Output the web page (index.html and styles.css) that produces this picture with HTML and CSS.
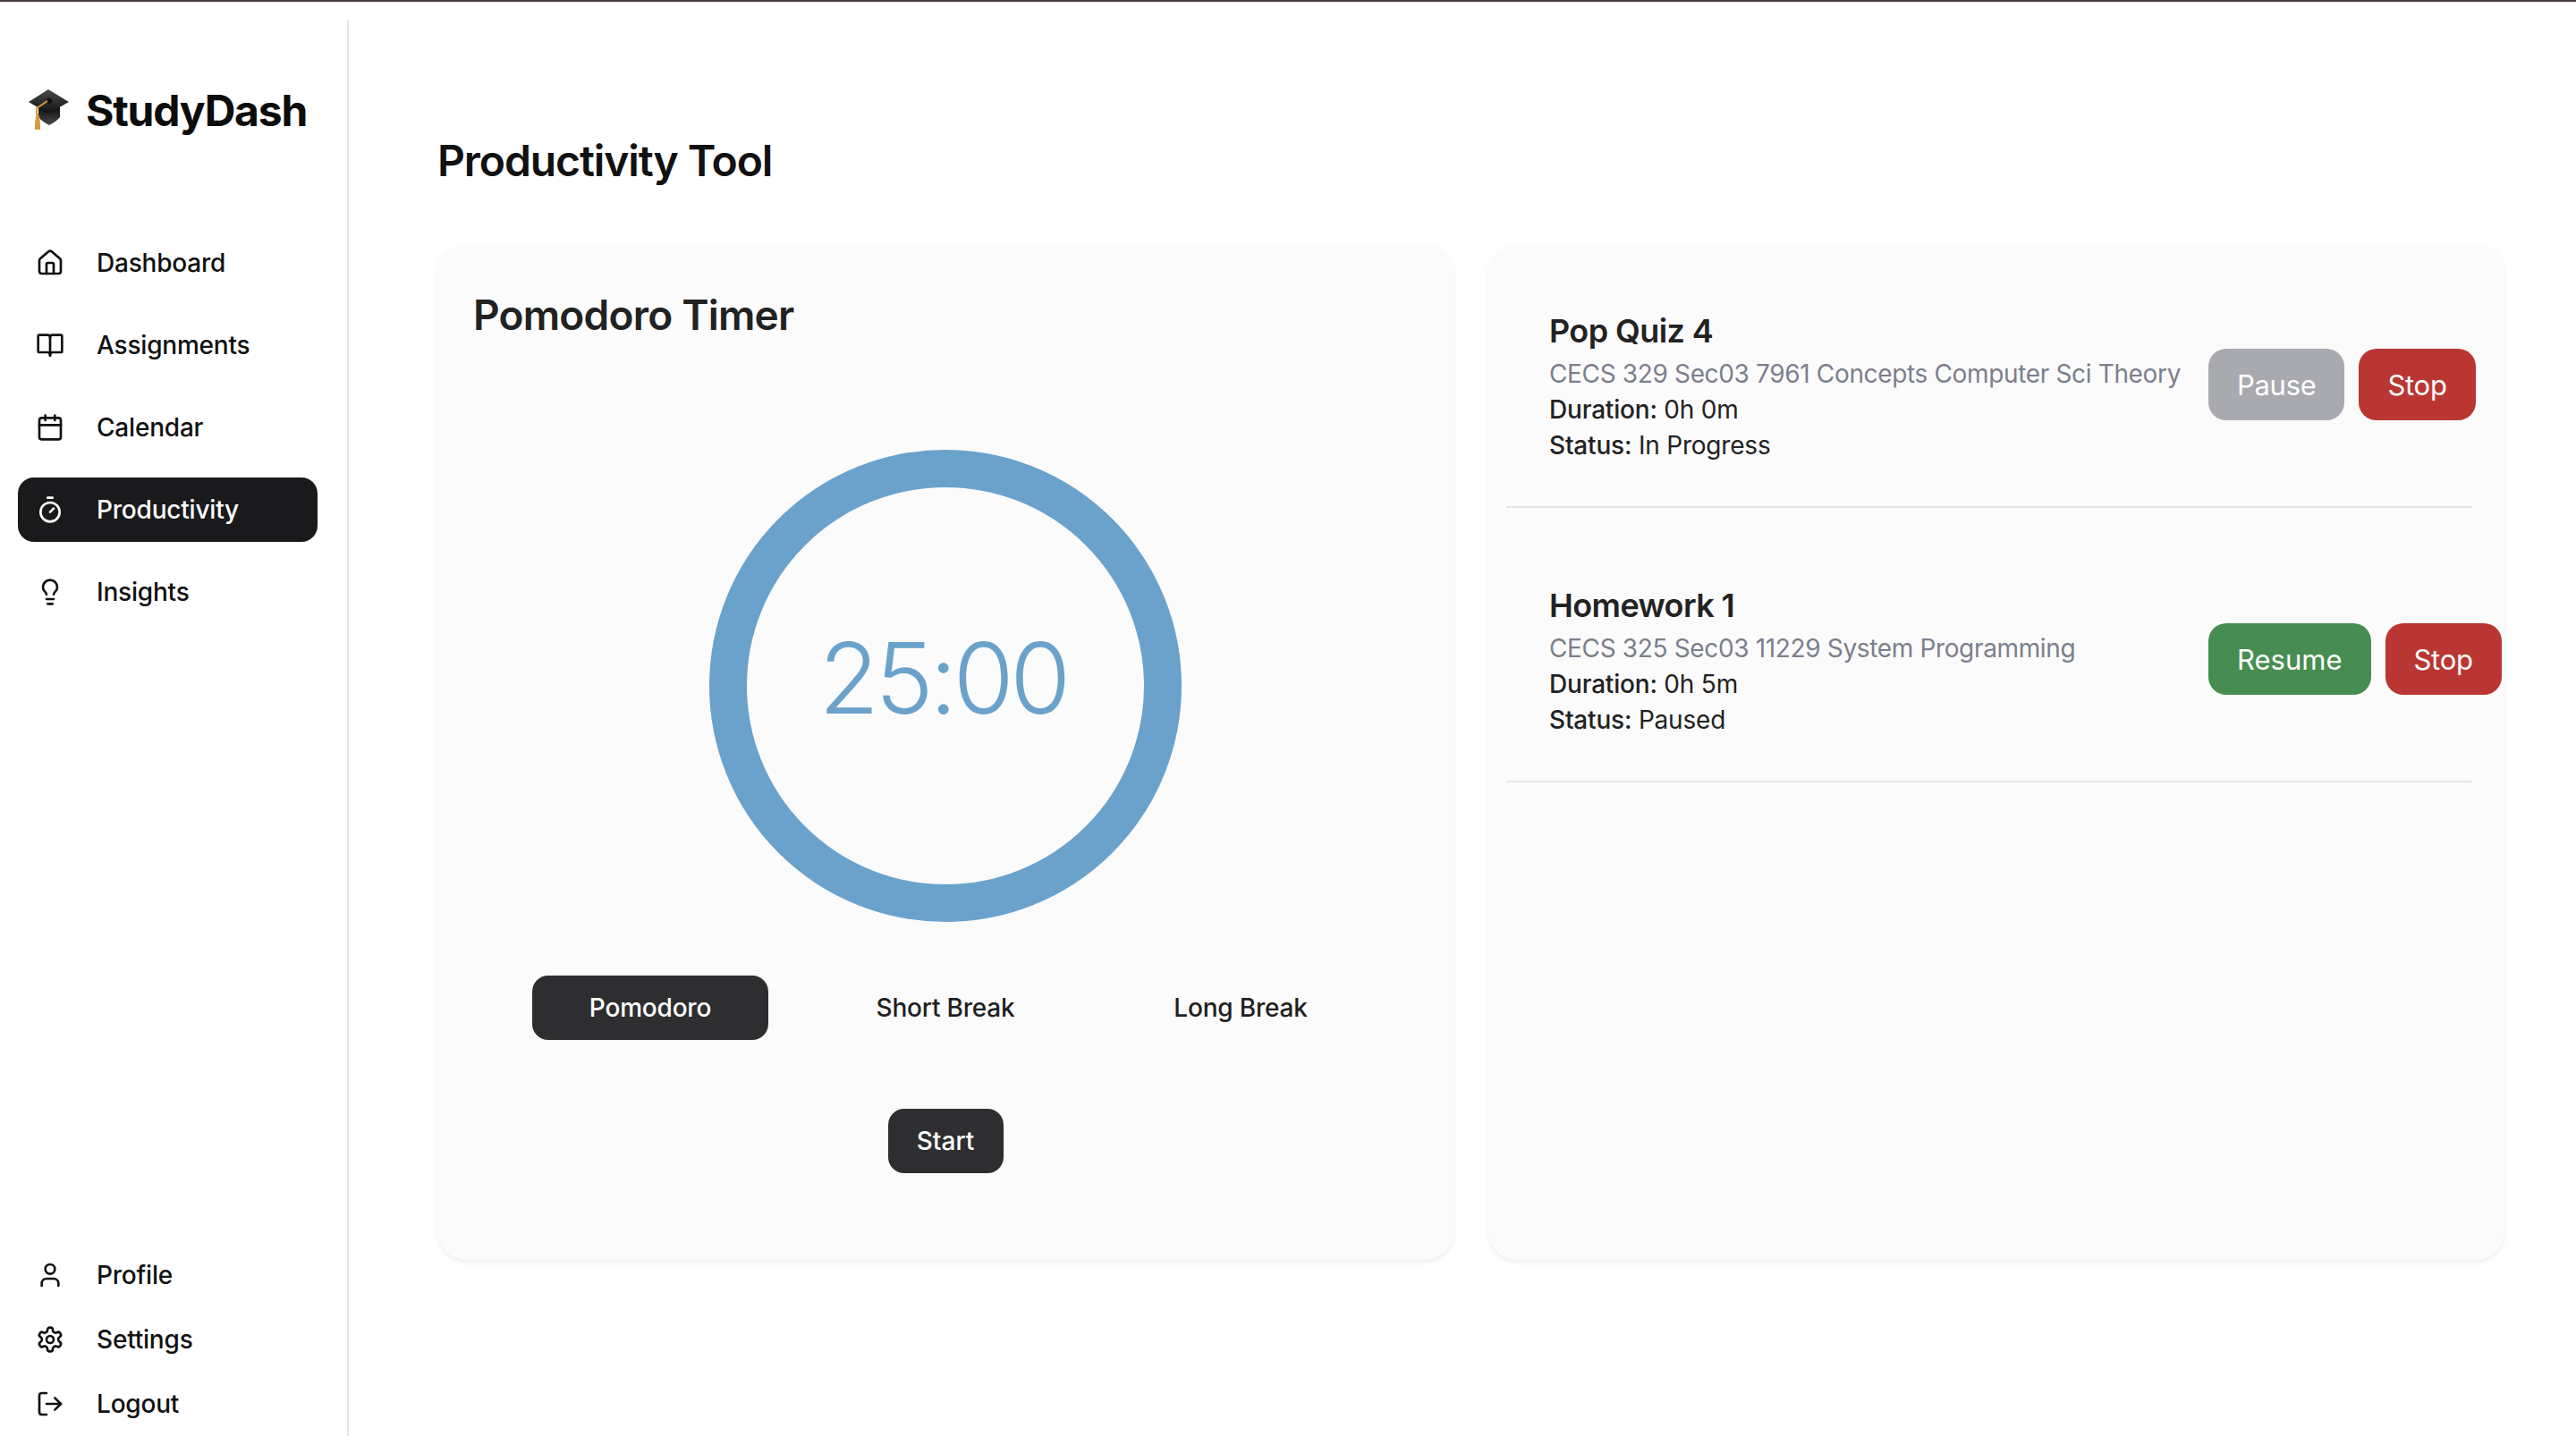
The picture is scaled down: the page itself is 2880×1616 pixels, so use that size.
FILE: index.html
```html
<!DOCTYPE html>
<html>
<head>
  <title>StudyDash - Productivity</title>
  <meta charset="utf-8">
  <link rel="stylesheet" href="styles.css">
</head>
<body>
  <div class="top-line"></div>
  <div class="shell">
    <aside class="sidebar">
      <div class="logo">
        <svg class="logo-cap" viewBox="0 0 46 46" width="46" height="46">
          <defs>
            <linearGradient id="capTop" x1="0" y1="0" x2="0" y2="1">
              <stop offset="0" stop-color="#4a4a4a"/>
              <stop offset="1" stop-color="#111"/>
            </linearGradient>
            <linearGradient id="capBase" x1="0" y1="0" x2="0" y2="1">
              <stop offset="0" stop-color="#0e0e0e"/>
              <stop offset="1" stop-color="#4c4c4c"/>
            </linearGradient>
          </defs>
          <path d="M11 20v11c3 4 8 7 12 9 4-2 9-5 12-9V20z" fill="url(#capBase)"/>
          <path d="M0 14 22 0l23 14-23 13z" fill="url(#capTop)"/>
          <circle cx="23" cy="13" r="3.2" fill="#111"/>
          <path d="M21 13 9 21v7" fill="none" stroke="#d99a2b" stroke-width="2"/>
          <path d="M9 27c-2 6-2 12-2 18h6c0-6 0-12-2-18z" fill="#d99a3a"/>
        </svg>
        <span class="logo-text">StudyDash</span>
      </div>

      <nav class="nav-main">
        <a class="nav-item">
          <svg class="icon" viewBox="0 0 24 24"><path d="M15 21v-8a1 1 0 0 0-1-1h-4a1 1 0 0 0-1 1v8"/><path d="M3 10a2 2 0 0 1 .7-1.5l7-6a2 2 0 0 1 2.6 0l7 6a2 2 0 0 1 .7 1.5v9a2 2 0 0 1-2 2H5a2 2 0 0 1-2-2z"/></svg>
          <span>Dashboard</span>
        </a>
        <a class="nav-item">
          <svg class="icon" viewBox="0 0 24 24"><path d="M12 5.500V21"/><path d="M12 5.500C12 4 11 3.500 10 3.500H3a1 1 0 0 0-1 1V17a1 1 0 0 0 1 1h7c1 0 2 .8 2 2.500 0-1.700 1-2.500 2-2.500h7a1 1 0 0 0 1-1V4.500a1 1 0 0 0-1-1h-7c-1 0-2 .5-2 2z"/></svg>
          <span>Assignments</span>
        </a>
        <a class="nav-item">
          <svg class="icon" viewBox="0 0 24 24"><path d="M8 2v4"/><path d="M16 2v4"/><rect x="3" y="4" width="18" height="18" rx="2"/><path d="M3 10h18"/></svg>
          <span>Calendar</span>
        </a>
        <a class="nav-item active">
          <svg class="icon" viewBox="0 0 24 24"><path d="M10 2h4"/><path d="m12 14 3-3"/><circle cx="12" cy="14" r="8"/></svg>
          <span>Productivity</span>
        </a>
        <a class="nav-item">
          <svg class="icon" viewBox="0 0 24 24"><path d="M15 14c.2-1 .7-1.7 1.500-2.500 1-.9 1.500-2.200 1.500-3.500A6 6 0 0 0 6 8c0 1 .2 2.200 1.500 3.500.7.7 1.300 1.500 1.500 2.500"/><path d="M9 18h6"/><path d="M10 22h4"/></svg>
          <span>Insights</span>
        </a>
      </nav>

      <nav class="nav-bottom">
        <a class="nav-item">
          <svg class="icon" viewBox="0 0 24 24"><path d="M19 21v-2a4 4 0 0 0-4-4H9a4 4 0 0 0-4 4v2"/><circle cx="12" cy="7" r="4"/></svg>
          <span>Profile</span>
        </a>
        <a class="nav-item">
          <svg class="icon" viewBox="0 0 24 24"><path d="M12.22 2h-.44a2 2 0 0 0-2 2v.18a2 2 0 0 1-1 1.73l-.43.25a2 2 0 0 1-2 0l-.15-.08a2 2 0 0 0-2.73.73l-.22.38a2 2 0 0 0 .73 2.73l.15.1a2 2 0 0 1 1 1.72v.51a2 2 0 0 1-1 1.74l-.15.09a2 2 0 0 0-.73 2.73l.22.38a2 2 0 0 0 2.73.73l.15-.08a2 2 0 0 1 2 0l.43.25a2 2 0 0 1 1 1.73V20a2 2 0 0 0 2 2h.44a2 2 0 0 0 2-2v-.18a2 2 0 0 1 1-1.73l.43-.25a2 2 0 0 1 2 0l.15.08a2 2 0 0 0 2.73-.73l.22-.39a2 2 0 0 0-.73-2.73l-.15-.08a2 2 0 0 1-1-1.74v-.5a2 2 0 0 1 1-1.74l.15-.09a2 2 0 0 0 .73-2.73l-.22-.38a2 2 0 0 0-2.73-.73l-.15.08a2 2 0 0 1-2 0l-.43-.25a2 2 0 0 1-1-1.73V4a2 2 0 0 0-2-2z"/><circle cx="12" cy="12" r="3"/></svg>
          <span>Settings</span>
        </a>
        <a class="nav-item">
          <svg class="icon" viewBox="0 0 24 24"><path d="M9 21H5a2 2 0 0 1-2-2V5a2 2 0 0 1 2-2h4"/><path d="m16 17 5-5-5-5"/><path d="M21 12H9"/></svg>
          <span>Logout</span>
        </a>
      </nav>
    </aside>

    <main class="content">
      <h1 class="page-title">Productivity Tool</h1>
      <div class="cards">
        <section class="card timer-card">
          <h2 class="card-title">Pomodoro Timer</h2>
          <div class="ring">
            <span class="ring-time">25:00</span>
          </div>
          <div class="modes">
            <button class="mode-btn selected">Pomodoro</button>
            <button class="mode-btn">Short Break</button>
            <button class="mode-btn">Long Break</button>
          </div>
          <button class="start-btn">Start</button>
        </section>

        <section class="card tasks-card">
          <div class="task">
            <div class="task-info">
              <h3 class="task-name">Pop Quiz 4</h3>
              <p class="task-course">CECS 329 Sec03 7961 Concepts Computer Sci Theory</p>
              <p class="task-line"><b>Duration:</b> 0h 0m</p>
              <p class="task-line"><b>Status:</b> In Progress</p>
            </div>
            <div class="task-actions">
              <button class="task-btn pause">Pause</button>
              <button class="task-btn stop">Stop</button>
            </div>
          </div>
          <div class="task">
            <div class="task-info">
              <h3 class="task-name">Homework 1</h3>
              <p class="task-course">CECS 325 Sec03 11229 System Programming</p>
              <p class="task-line"><b>Duration:</b> 0h 5m</p>
              <p class="task-line"><b>Status:</b> Paused</p>
            </div>
            <div class="task-actions">
              <button class="task-btn resume">Resume</button>
              <button class="task-btn stop">Stop</button>
            </div>
          </div>
        </section>
      </div>
    </main>
  </div>
</body>
</html>
```

FILE: styles.css
```css
* {
  box-sizing: border-box;
}
html, body {
  margin: 0;
  height: 100%;
  background: #fff;
}
body {
  font-family: "Inter", "Liberation Sans", sans-serif;
  color: #1a1a1a;
  overflow: hidden;
}
button {
  font-family: inherit;
  border: 0;
  cursor: pointer;
}

.top-line {
  height: 2px;
  background: #4a3f45;
}
.shell {
  display: flex;
  height: 1584px;
  margin-top: 20px;
}

/* sidebar */
.sidebar {
  display: flex;
  flex-direction: column;
  width: 390px;
  flex-shrink: 0;
  padding: 0 33px 0 20px;
  border-right: 2px solid #e5e5e5;
}
.logo {
  display: flex;
  align-items: center;
  gap: 18px;
  margin: 76px 0 0 12px;
  height: 50px;
}
.logo-cap {
  flex-shrink: 0;
}
.logo-text {
  font-size: 48px;
  font-weight: 700;
  letter-spacing: -1.2px;
  color: #0c0c0c;
}
.nav-main {
  display: flex;
  flex-direction: column;
  gap: 20px;
  margin-top: 110px;
}
.nav-bottom {
  display: flex;
  flex-direction: column;
  margin-top: auto;
}
.nav-item {
  display: flex;
  align-items: center;
  gap: 36px;
  height: 72px;
  padding-left: 20px;
  border-radius: 18px;
  font-size: 28px;
  font-weight: 500;
  letter-spacing: -0.2px;
  color: #111;
}
.nav-item.active {
  background: #1a1a1c;
  color: #fff;
}
.icon {
  width: 32px;
  height: 32px;
  flex-shrink: 0;
  fill: none;
  stroke: currentColor;
  stroke-width: 2;
  stroke-linecap: round;
  stroke-linejoin: round;
}

/* main area */
.content {
  flex: 1;
  padding: 0 80px 0 99px;
}
.page-title {
  margin: 128px 0 0;
  font-size: 48px;
  line-height: 60px;
  font-weight: 600;
  letter-spacing: -1.1px;
  color: #111;
}
.cards {
  display: grid;
  grid-template-columns: 1136px 1136px;
  gap: 39px;
  margin-top: 63px;
}
.card {
  height: 1136px;
  background: #fbfbfb;
  border-radius: 32px;
  box-shadow: 0 3px 6px -1px rgba(0, 0, 0, 0.09);
}

/* timer */
.timer-card {
  display: flex;
  flex-direction: column;
  align-items: center;
  padding-top: 50px;
}
.card-title {
  align-self: flex-start;
  margin: 0 0 0 40px;
  font-size: 46px;
  line-height: 58px;
  font-weight: 600;
  letter-spacing: -0.8px;
  color: #222;
}
.ring {
  display: flex;
  align-items: center;
  justify-content: center;
  width: 528px;
  height: 528px;
  margin-top: 122px;
  border: 42px solid #6aa2cc;
  border-radius: 50%;
}
.ring-time {
  margin: 0 6px 18px 0;
  font-size: 110px;
  font-weight: 300;
  letter-spacing: -4.5px;
  color: #6aa2cc;
}
.modes {
  display: grid;
  grid-template-columns: repeat(3, 264px);
  gap: 66px;
  margin-top: 60px;
}
.mode-btn {
  height: 72px;
  border-radius: 18px;
  background: transparent;
  color: #1f1f1f;
  font-size: 28px;
  font-weight: 500;
  letter-spacing: -0.2px;
}
.mode-btn.selected {
  background: #2e2e30;
  color: #fff;
}
.start-btn {
  width: 129px;
  height: 72px;
  margin-top: 77px;
  border-radius: 18px;
  background: #2e2e30;
  color: #fff;
  font-size: 28px;
  font-weight: 500;
}

/* tasks */
.tasks-card {
  padding: 20px 36px 0 20px;
}
.task {
  display: flex;
  align-items: flex-start;
  height: 275px;
  padding: 55px 0 0 48px;
  margin-bottom: 32px;
  border-bottom: 2px solid #e5e5e5;
}
.task-info {
  flex: 0 0 737px;
}
.task-name {
  margin: 0 0 6px;
  font-size: 36px;
  line-height: 44px;
  font-weight: 600;
  letter-spacing: -0.6px;
  color: #222;
}
.task-course {
  margin: 0;
  font-size: 28px;
  line-height: 40px;
  letter-spacing: -0.35px;
  color: #7b7f8c;
}
.task-line {
  margin: 0;
  font-size: 28px;
  line-height: 40px;
  letter-spacing: -0.2px;
  color: #222;
}
.task-line b {
  font-weight: 500;
}
.task-actions {
  display: flex;
  gap: 16px;
  flex-shrink: 0;
  margin-top: 42px;
}
.task-btn {
  height: 80px;
  padding: 0 32px;
  border-radius: 20px;
  color: #fff;
  font-size: 31px;
  font-weight: 400;
  letter-spacing: -0.3px;
}
.task-btn.pause {
  background: #a9a9b0;
}
.task-btn.stop {
  background: #b93632;
}
.task-btn.resume {
  background: #478d52;
  letter-spacing: 0;
}
```
